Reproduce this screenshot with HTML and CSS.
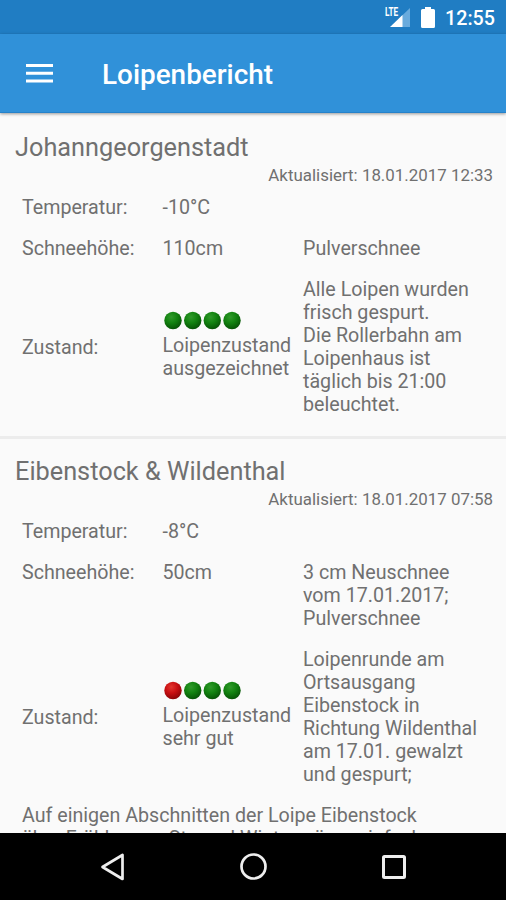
FILE: index.html
```html
<!DOCTYPE html>
<html lang="de">
<head>
<meta charset="utf-8">
<title>Loipenbericht</title>
<link rel="stylesheet" href="styles.css">
</head>
<body>
<svg class="defs" width="0" height="0" aria-hidden="true">
  <defs>
    <radialGradient id="green" cx=".4" cy=".3" r=".7"><stop offset="0" stop-color="#319a2b"/><stop offset=".5" stop-color="#128210"/><stop offset="1" stop-color="#075506"/></radialGradient>
    <radialGradient id="red" cx=".4" cy=".3" r=".7"><stop offset="0" stop-color="#e3362f"/><stop offset=".5" stop-color="#c80f12"/><stop offset="1" stop-color="#8c0508"/></radialGradient>
  </defs>
</svg>
<div class="statusbar">
  <div class="network"><span class="lte">LTE</span>
    <svg class="signal" width="20" height="19" viewBox="0 0 20 19"><path d="M9 10.500 20 0V19H9Z" fill="#69abdd"/><path d="M0 19 12.500 7V19Z" fill="#fff"/></svg>
  </div>
  <svg class="battery" width="14" height="21" viewBox="0 0 14 21"><path d="M4 0h6v2h2.500Q14 2 14 3.500V19.500Q14 21 12.500 21h-11Q0 21 0 19.500v-16Q0 2 1.500 2H4Z" fill="#fff"/></svg>
  <span class="clock">12:55</span>
</div>
<header class="appbar">
  <svg class="menu" width="27" height="20" viewBox="0 0 27 20"><path d="M0 1.500h27M0 9.200h27M0 16.900h27" stroke="#fff" stroke-width="3"/></svg>
  <h1>Loipenbericht</h1>
</header>
<main>
  <section class="report">
    <h2>Johanngeorgenstadt</h2>
    <p class="updated">Aktualisiert: 18.01.2017 12:33</p>
    <div class="grid">
      <div>Temperatur:</div><div>-10°C</div><div></div>
      <div>Schneehöhe:</div><div>110cm</div><div>Pulverschnee</div>
      <div>Zustand:</div>
      <div class="rating"><svg class="dots" width="80" height="20" viewBox="0 0 80 20"><g fill="url(#green)"><circle cx="10" cy="10.500" r="8.700"/><circle cx="29.700" cy="10.500" r="8.700"/><circle cx="49.300" cy="10.500" r="8.700"/><circle cx="69" cy="10.500" r="8.700"/></g></svg>Loipenzustand<br>ausgezeichnet</div>
      <div>Alle Loipen wurden<br>frisch gespurt.<br>Die Rollerbahn am<br>Loipenhaus ist<br>täglich bis 21:00<br>beleuchtet.</div>
    </div>
  </section>
  <section class="report">
    <h2>Eibenstock &amp; Wildenthal</h2>
    <p class="updated">Aktualisiert: 18.01.2017 07:58</p>
    <div class="grid">
      <div>Temperatur:</div><div>-8°C</div><div></div>
      <div>Schneehöhe:</div><div>50cm</div><div>3 cm Neuschnee<br>vom 17.01.2017;<br>Pulverschnee</div>
      <div>Zustand:</div>
      <div class="rating"><svg class="dots" width="80" height="20" viewBox="0 0 80 20"><circle cx="10" cy="10.500" r="8.700" fill="url(#red)"/><g fill="url(#green)"><circle cx="29.700" cy="10.500" r="8.700"/><circle cx="49.300" cy="10.500" r="8.700"/><circle cx="69" cy="10.500" r="8.700"/></g></svg>Loipenzustand<br>sehr gut</div>
      <div>Loipenrunde am<br>Ortsausgang<br>Eibenstock in<br>Richtung Wildenthal<br>am 17.01. gewalzt<br>und gespurt;</div>
    </div>
    <p class="note">Auf einigen Abschnitten der Loipe Eibenstock<br>über Frühbusser Str. und Wintergrüner einfach</p>
  </section>
</main>
<nav class="navbar">
  <svg width="26" height="30" viewBox="0 0 26 30"><path d="M23.500 3V27L3.500 15Z" fill="none" stroke="#eee" stroke-width="2.700" stroke-linejoin="round"/></svg>
  <svg width="28" height="28" viewBox="0 0 28 28"><circle cx="14.500" cy="13.500" r="12" fill="none" stroke="#eee" stroke-width="2.700"/></svg>
  <svg width="26" height="26" viewBox="0 0 26 26"><rect x="2.500" y="2.500" width="21" height="21" rx="1" fill="none" stroke="#eee" stroke-width="3"/></svg>
</nav>
</body>
</html>
```
FILE: styles.css
```css
* { box-sizing: border-box; }
body {
  margin: 0;
  width: 506px;
  height: 900px;
  display: flex;
  flex-direction: column;
  overflow: hidden;
  background: #fafafa;
  color: #707070;
  font: 19.65px/23px Roboto, sans-serif;
}
.defs { position: absolute; }
svg { display: block; flex: none; }
h1, h2, p { margin: 0; }
.statusbar {
  flex: none;
  height: 34px;
  padding-right: 11px;
  display: flex;
  justify-content: flex-end;
  align-items: flex-start;
  background: #207dc3;
  color: #fff;
}
.network { width: 26px; height: 27px; padding: 8px 0 0 6px; position: relative; margin-right: 11px; }
.lte {
  position: absolute;
  left: 1px;
  top: 7px;
  font: 700 12px/11px Roboto, sans-serif;
  transform: scaleX(.68);
  transform-origin: left;
}
.battery { margin: 7px 10px 0 0; }
.clock { margin-top: 7px; font-size: 19.7px; font-weight: 500; }
.appbar {
  flex: none;
  height: 79px;
  padding: 1px 26px 0;
  display: flex;
  align-items: center;
  gap: 49px;
  background: #3091d9;
  border-bottom: 1px solid #2682ca;
  box-shadow: 0 1px 3px #0006;
  color: #fff;
  z-index: 1;
}
.appbar h1 { font-size: 27.9px; line-height: 32px; font-weight: 500; padding-top: 2px; }
main { flex: 1; min-height: 0; overflow: hidden; }
.report { padding: 18px 13px 0 15px; }
.report:first-child { height: 326px; padding-top: 20px; border-bottom: 3px solid #ececec; }
.report h2 { font-size: 25.3px; line-height: 30px; font-weight: 400; }
.updated { text-align: right; font-size: 16.9px; line-height: 20px; margin-top: 2px; }
.grid {
  display: grid;
  grid-template-columns: 140.500px 140.500px 1fr;
  row-gap: 18px;
  margin: 11px 0 0 7px;
  align-items: center;
}
.grid > div { white-space: nowrap; min-height: 23px; }
.grid > div:nth-child(-n+6) { align-self: start; }
.rating { padding-bottom: 4px; }
.dots { margin-bottom: 4px; }
.note { margin: 18px 0 0 7px; white-space: nowrap; }
.navbar {
  flex: none;
  height: 67px;
  display: flex;
  justify-content: center;
  align-items: center;
  gap: 114px;
  background: #000;
}
```
